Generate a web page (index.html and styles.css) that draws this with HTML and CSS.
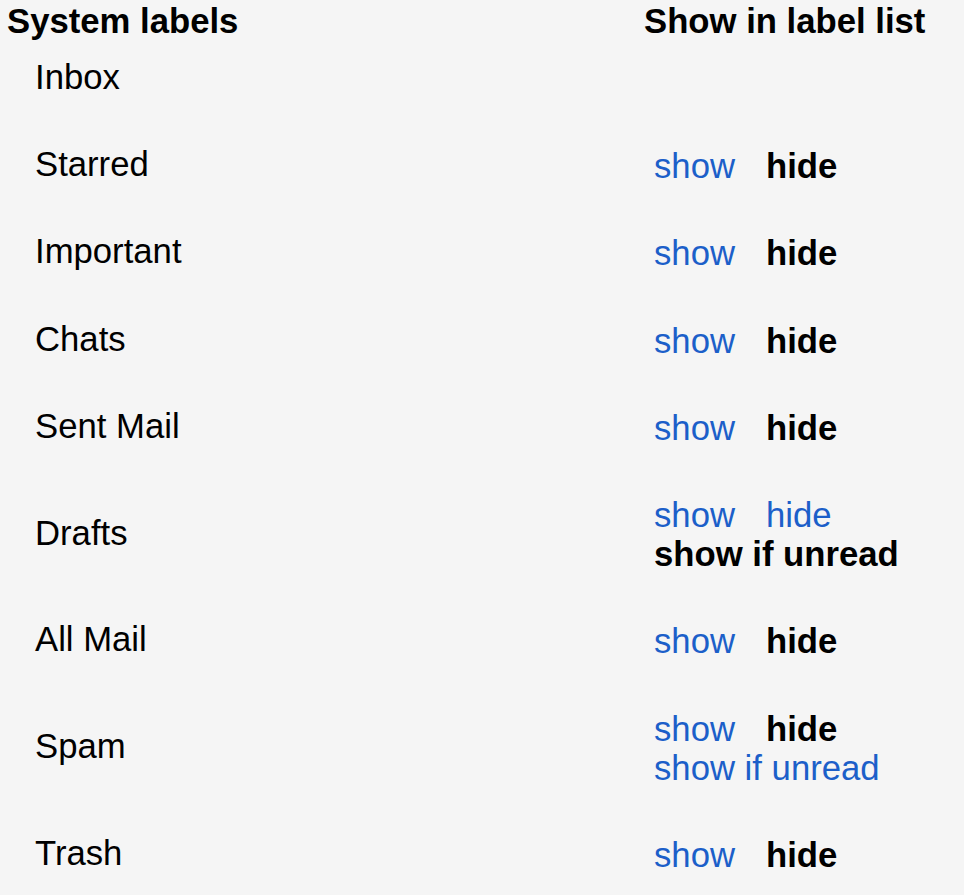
FILE: index.html
```html
<!DOCTYPE html>
<html lang="en">
<head>
  <meta charset="UTF-8">
  <title>Labels</title>
  <link rel="stylesheet" href="styles.css">
</head>
<body>
  <div class="labels">
    <div class="row header">
      <div class="col-name">System labels</div>
      <div class="col-show">Show in label list</div>
    </div>

    <div class="row">
      <div class="col-name">Inbox</div>
      <div class="col-show"><div class="line"></div></div>
    </div>

    <div class="row">
      <div class="col-name">Starred</div>
      <div class="col-show">
        <div class="line"><a class="link">show</a><b>hide</b></div>
      </div>
    </div>

    <div class="row">
      <div class="col-name">Important</div>
      <div class="col-show">
        <div class="line"><a class="link">show</a><b>hide</b></div>
      </div>
    </div>

    <div class="row">
      <div class="col-name">Chats</div>
      <div class="col-show">
        <div class="line"><a class="link">show</a><b>hide</b></div>
      </div>
    </div>

    <div class="row">
      <div class="col-name">Sent Mail</div>
      <div class="col-show">
        <div class="line"><a class="link">show</a><b>hide</b></div>
      </div>
    </div>

    <div class="row">
      <div class="col-name">Drafts</div>
      <div class="col-show">
        <div class="line"><a class="link">show</a><a class="link">hide</a></div>
        <div class="line"><b>show if unread</b></div>
      </div>
    </div>

    <div class="row">
      <div class="col-name">All Mail</div>
      <div class="col-show">
        <div class="line"><a class="link">show</a><b>hide</b></div>
      </div>
    </div>

    <div class="row">
      <div class="col-name">Spam</div>
      <div class="col-show">
        <div class="line"><a class="link">show</a><b>hide</b></div>
        <div class="line"><a class="link">show if unread</a></div>
      </div>
    </div>

    <div class="row">
      <div class="col-name">Trash</div>
      <div class="col-show">
        <div class="line"><a class="link">show</a><b>hide</b></div>
      </div>
    </div>
  </div>
</body>
</html>
```

FILE: styles.css
```css
:root {
  --background: #f5f5f5;
  --text: #000000;
  --link: #1c5fc9;
}

* {
  margin: 0;
  padding: 0;
  box-sizing: border-box;
}

body {
  font-family: "Liberation Sans", Arial, sans-serif;
  font-size: 34.7px;
  line-height: 39.2px;
  background: var(--background);
  color: var(--text);
}

.labels {
  padding-left: 7px;
}

.row {
  display: grid;
  grid-template-columns: 637px 1fr;
  align-items: center;
  padding: 22px 0;
}

.row .col-name {
  padding-left: 28px;
}

.row .col-show {
  padding-left: 10px;
  padding-top: 4px;
}

.header {
  padding: 9px 0 0;
  font-weight: bold;
  line-height: 25px;
}

.header .col-name,
.header .col-show {
  padding: 0;
}

.line {
  display: flex;
  gap: 31px;
  height: 39.2px;
}

.link {
  color: var(--link);
  cursor: pointer;
}

b {
  font-weight: bold;
}
```
